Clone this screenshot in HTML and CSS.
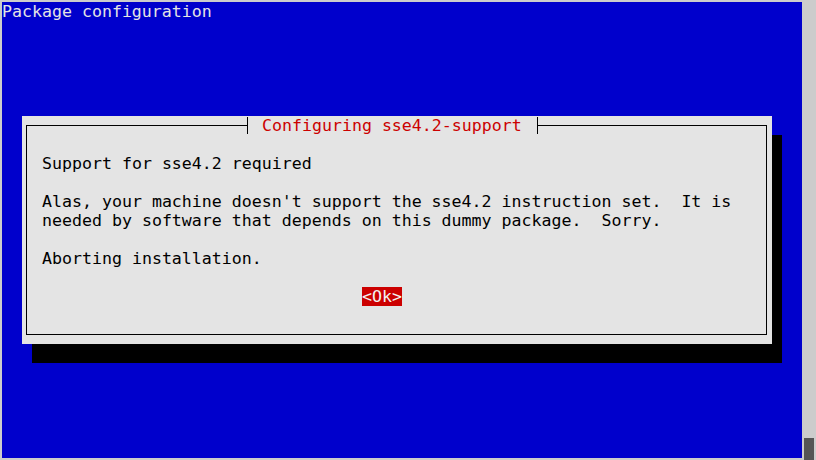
FILE: index.html
```html
<!DOCTYPE html>
<html lang="en">
<head>
    <meta charset="UTF-8">
    <title>Package configuration</title>
    <link rel="stylesheet" href="styles.css">
</head>
<body>
    <div class="window">
        <div class="terminal">
            <div class="header">Package configuration</div>

            <div class="dialog">
                <div class="title">
                    <span class="tee tee-left"></span>
                    <span class="title-text">Configuring sse4.2-support</span>
                    <span class="tee tee-right"></span>
                </div>
                <div class="frame">
                    <div class="message">Support for sse4.2 required

Alas, your machine doesn't support the sse4.2 instruction set.  It is
needed by software that depends on this dummy package.  Sorry.

Aborting installation.
</div>
                    <div class="button-row">
                        <span class="ok-btn">&lt;Ok&gt;</span>
                    </div>
                </div>
            </div>
        </div>
        <div class="scrollbar">
            <div class="thumb"></div>
        </div>
    </div>
</body>
</html>
```

FILE: styles.css
```css
body {
  margin: 0;
  background: #cccccc;
}

.window {
  display: flex;
  width: 816px;
  height: 460px;
  overflow: hidden;
}

.terminal {
  margin: 2px 0 0 2px;
  width: 800px;
  height: 456px;
  background: #0000cc;
  font-family: "DejaVu Sans Mono", monospace;
  font-size: 16.6px;
  line-height: 19px;
  color: #e4e4e4;
}

.header {
  height: 19px;
  white-space: pre;
}

/* dialog box, 75 cols x 12 rows */
.dialog {
  position: relative;
  margin: 95px 0 0 20px;
  width: 750px;
  height: 228px;
  background: #e4e4e4;
  color: #000;
  box-shadow: 10px 19px 0 #000;
}

.frame {
  box-sizing: border-box;
  margin: 9px 5px 9px 4px;
  height: 210px;
  border: 1px solid #000;
  display: inline-block;
  width: 741px;
}

.message {
  white-space: pre;
  padding: 28px 0 0 15px;
}

.button-row {
  display: flex;
  padding-left: 335px;
  margin-top: 19px;
}

.ok-btn {
  background: #cc0000;
  color: #f2f2f2;
  height: 19px;
}

/* title over the top border */
.title {
  position: absolute;
  left: 220px;
  top: 0;
  display: flex;
  height: 19px;
}

.title-text {
  background: #e4e4e4;
  color: #cc0000;
  padding: 0 10px;
  white-space: pre;
}

.tee {
  position: relative;
  width: 10px;
  height: 19px;
  background: #e4e4e4;
}

.tee::before {
  content: "";
  position: absolute;
  left: 5px;
  top: 1px;
  width: 1px;
  height: 17px;
  background: #000;
}

.tee::after {
  content: "";
  position: absolute;
  top: 9px;
  width: 5px;
  height: 1px;
  background: #000;
}

.tee-left::after {
  left: 0;
}

.tee-right::after {
  left: 5px;
}

.scrollbar {
  position: relative;
  flex: 1;
}

.thumb {
  position: absolute;
  left: 2px;
  right: 2px;
  top: 438px;
  bottom: 0;
  background: #555555;
}
```
